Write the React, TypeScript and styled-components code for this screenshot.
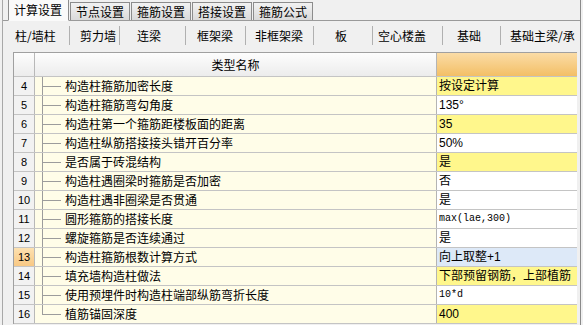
import styled, { createGlobalStyle } from "styled-components"

const GlobalStyle = createGlobalStyle`
  html, body {
    margin: 0;
    padding: 0;
    background: #f0f0f0;
  }
  body {
    font-family: "Noto Sans CJK SC", "Liberation Sans", sans-serif;
    font-size: 12px;
    color: #000;
  }
`

const Frame = styled.div`
  margin-left: 2px;
  width: 577px;
  height: 325px;
  border-left: 1px solid #a8a8a8;
  border-right: 1px solid #8a8a8a;
  overflow: hidden;
`

const TabBar = styled.div`
  display: flex;
  align-items: flex-end;
  gap: 1px;
  height: 21px;
  padding-left: 5px;
  border-bottom: 1px solid #9a9a9a;
  box-sizing: border-box;
`

const Tab = styled.div<{ $active?: boolean }>`
  height: ${(p) => (p.$active ? "20px" : "17px")};
  padding: 0 ${(p) => (p.$active ? "6px" : "5px")} 0 5px;
  margin-bottom: ${(p) => (p.$active ? "-1px" : "0")};
  border: 1px solid #8c8c8c;
  border-bottom: ${(p) => (p.$active ? "1px solid #fafafa" : "none")};
  background: ${(p) =>
    p.$active ? "#fafafa" : "linear-gradient(#f2f2f2, #dadada)"};
  display: flex;
  align-items: center;
  line-height: 14px;
  white-space: nowrap;
`

const SubTabs = styled.div`
  display: flex;
  height: 25px;
  padding-left: 7px;
  margin-top: 1px;
  white-space: nowrap;
`

const SubTab = styled.div<{ $w: number; $pl: number; $last?: boolean }>`
  flex: 0 0 ${(p) => p.$w}px;
  box-sizing: border-box;
  padding-left: ${(p) => p.$pl}px;
  display: flex;
  align-items: center;
  border-right: ${(p) => (p.$last ? "none" : "1px solid #b0b0b0")};
  margin: 4px 0 2px;
  line-height: 14px;
  overflow: hidden;
`

const Table = styled.div`
  margin: 5px 3px 0 10px;
  border-top: 1px solid #a0a0a0;
  border-left: 1px solid #a0a0a0;
  background: #fff;
`

const Row = styled.div<{ $head?: boolean }>`
  display: grid;
  grid-template-columns: 21px 402px 1fr;
  height: ${(p) => (p.$head ? "24px" : "19px")};
  border-bottom: 1px solid #c4c4c4;
  box-sizing: border-box;
`

const NumCell = styled.div<{ $hot?: boolean; $head?: boolean }>`
  display: flex;
  align-items: center;
  justify-content: center;
  font-family: "Liberation Sans", sans-serif;
  font-size: 11px;
  background: ${(p) =>
    p.$hot
      ? "linear-gradient(#fde1b0, #f8c884)"
      : p.$head
      ? "linear-gradient(#fdfdfd, #ececec)"
      : "#f2f2f2"};
  border-right: 1px solid #b8b8b8;
`

const NameCell = styled.div<{ $head?: boolean }>`
  display: flex;
  align-items: center;
  justify-content: ${(p) => (p.$head ? "center" : "flex-start")};
  background: ${(p) =>
    p.$head ? "linear-gradient(#fdfdfd, #ececec)" : "#fffde8"};
  border-right: 1px solid #b4b4b4;
  line-height: 14px;
  white-space: nowrap;
  overflow: hidden;
`

const Branch = styled.span<{ $last?: boolean }>`
  flex: 0 0 auto;
  align-self: flex-start;
  width: 19px;
  height: ${(p) => (p.$last ? "10px" : "100%")};
  margin: 0 3px 0 7px;
  border-left: 1px solid #9c9c9c;
  background: linear-gradient(#9c9c9c, #9c9c9c) no-repeat 0 9px / 18px 1px;
`

type Tone = "yellow" | "white" | "blue" | "head"

const tones: Record<Tone, string> = {
  yellow: "#fff78c",
  white: "#ffffff",
  blue: "#dde9f8",
  head: "linear-gradient(#fbdca6, #f3bf66)",
}

const ValueCell = styled.div<{ $tone: Tone; $mono?: boolean }>`
  display: flex;
  align-items: center;
  padding-left: 2px;
  background: ${(p) => tones[p.$tone]};
  font-family: ${(p) =>
    p.$mono
      ? '"Liberation Mono", monospace'
      : '"Liberation Sans", "Noto Sans CJK SC", sans-serif'};
  font-size: ${(p) => (p.$mono ? "10px" : "12px")};
  line-height: 14px;
  white-space: nowrap;
  overflow: hidden;
`

const tabs = ["计算设置", "节点设置", "箍筋设置", "搭接设置", "箍筋公式"]

const subTabs = [
  { label: "柱/墙柱", w: 60, pl: 5 },
  { label: "剪力墙", w: 50, pl: 10 },
  { label: "连梁", w: 66, pl: 17 },
  { label: "框架梁", w: 60, pl: 11 },
  { label: "非框架梁", w: 68, pl: 9 },
  { label: "板", w: 59, pl: 21 },
  { label: "空心楼盖", w: 70, pl: 5 },
  { label: "基础", w: 58, pl: 14 },
  { label: "基础主梁/承", w: 80, pl: 9 },
]

const rows: { n: number; name: string; value: string; tone: Tone; mono?: boolean }[] = [
  { n: 4, name: "构造柱箍筋加密长度", value: "按设定计算", tone: "yellow" },
  { n: 5, name: "构造柱箍筋弯勾角度", value: "135°", tone: "white" },
  { n: 6, name: "构造柱第一个箍筋距楼板面的距离", value: "35", tone: "yellow" },
  { n: 7, name: "构造柱纵筋搭接接头错开百分率", value: "50%", tone: "white" },
  { n: 8, name: "是否属于砖混结构", value: "是", tone: "yellow" },
  { n: 9, name: "构造柱遇圈梁时箍筋是否加密", value: "否", tone: "white" },
  { n: 10, name: "构造柱遇非圈梁是否贯通", value: "是", tone: "white" },
  { n: 11, name: "圆形箍筋的搭接长度", value: "max(lae,300)", tone: "white", mono: true },
  { n: 12, name: "螺旋箍筋是否连续通过", value: "是", tone: "white" },
  { n: 13, name: "构造柱箍筋根数计算方式", value: "向上取整+1", tone: "blue" },
  { n: 14, name: "填充墙构造柱做法", value: "下部预留钢筋，上部植筋", tone: "yellow" },
  { n: 15, name: "使用预埋件时构造柱端部纵筋弯折长度", value: "10*d", tone: "white", mono: true },
  { n: 16, name: "植筋锚固深度", value: "400", tone: "yellow" },
]

export default function App() {
  return (
    <>
      <GlobalStyle />
      <Frame>
        <TabBar>
          {tabs.map((t, i) => (
            <Tab key={t} $active={i === 0}>
              {t}
            </Tab>
          ))}
        </TabBar>
        <SubTabs>
          {subTabs.map((s, i) => (
            <SubTab key={s.label} $w={s.w} $pl={s.pl} $last={i === subTabs.length - 1}>
              {s.label}
            </SubTab>
          ))}
        </SubTabs>
        <Table>
          <Row $head>
            <NumCell $head />
            <NameCell $head>类型名称</NameCell>
            <ValueCell $tone="head" />
          </Row>
          {rows.map((r, i) => (
            <Row key={r.n}>
              <NumCell $hot={r.n === 13}>{r.n}</NumCell>
              <NameCell>
                <Branch $last={i === rows.length - 1} />
                {r.name}
              </NameCell>
              <ValueCell $tone={r.tone} $mono={r.mono}>
                {r.value}
              </ValueCell>
            </Row>
          ))}
        </Table>
      </Frame>
    </>
  )
}
